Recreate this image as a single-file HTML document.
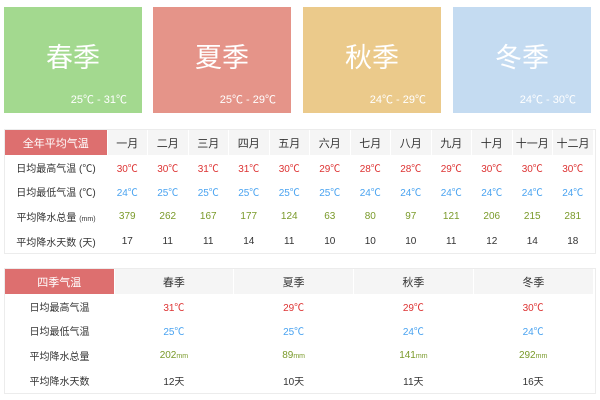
<!DOCTYPE html>
<html><head><meta charset="utf-8"><style>
*{margin:0;padding:0;box-sizing:border-box}
body{width:600px;height:400px;background:#fff;position:relative;overflow:hidden;font-family:"Liberation Sans","Noto Sans CJK SC",sans-serif}
.card{position:absolute;top:7px;width:138px;height:106px;color:#fff}
.card .t{position:absolute;top:35px;left:0;right:0;text-align:center;font-size:27px;line-height:32px}
.card .r{position:absolute;right:15px;top:86px;font-size:11px;line-height:14px}
table{position:absolute;border-collapse:collapse;font-size:10px;color:#333;table-layout:fixed}
td{text-align:center;height:24.6px;padding:0;white-space:nowrap}
tr.h td{background:#f5f5f5;font-size:11px;border-left:1px solid #fff;height:25px}
tr.h td.red{background:#dd6f6f;color:#fff;border-left:none}
.hi{color:#d33}.lo{color:#4aa3f0}.rn{color:#7a9a2a}
.wrap{position:absolute;border:1px solid #ececec}
</style></head><body>
<div class="card" style="left:4px;background:#a3d98f"><div class="t">春季</div><div class="r">25℃ - 31℃</div></div>
<div class="card" style="left:153px;background:#e59489"><div class="t">夏季</div><div class="r">25℃ - 29℃</div></div>
<div class="card" style="left:303px;background:#ebca8b"><div class="t">秋季</div><div class="r">24℃ - 29℃</div></div>
<div class="card" style="left:453px;background:#c4dbf1"><div class="t">冬季</div><div class="r">24℃ - 30℃</div></div>

<div class="wrap" style="left:4px;top:129px;width:592px;height:125px"></div>
<table style="left:5px;top:130px;width:588px">
<colgroup><col style="width:102px"><col span="12" style="width:40.5px"></colgroup>
<tr class="h"><td class="red">全年平均气温</td><td>一月</td><td>二月</td><td>三月</td><td>四月</td><td>五月</td><td>六月</td><td>七月</td><td>八月</td><td>九月</td><td>十月</td><td>十一月</td><td>十二月</td></tr>
<tr class="hi"><td style="color:#333">日均最高气温 (℃)</td><td>30℃</td><td>30℃</td><td>31℃</td><td>31℃</td><td>30℃</td><td>29℃</td><td>28℃</td><td>28℃</td><td>29℃</td><td>30℃</td><td>30℃</td><td>30℃</td></tr>
<tr class="lo"><td style="color:#333">日均最低气温 (℃)</td><td>24℃</td><td>25℃</td><td>25℃</td><td>25℃</td><td>25℃</td><td>25℃</td><td>24℃</td><td>24℃</td><td>24℃</td><td>24℃</td><td>24℃</td><td>24℃</td></tr>
<tr class="rn"><td style="color:#333">平均降水总量 <span style="font-size:7px">(mm)</span></td><td>379</td><td>262</td><td>167</td><td>177</td><td>124</td><td>63</td><td>80</td><td>97</td><td>121</td><td>206</td><td>215</td><td>281</td></tr>
<tr><td>平均降水天数 (天)</td><td>17</td><td>11</td><td>11</td><td>14</td><td>11</td><td>10</td><td>10</td><td>10</td><td>11</td><td>12</td><td>14</td><td>18</td></tr>
</table>

<div class="wrap" style="left:4px;top:268px;width:592px;height:126px"></div>
<table style="left:5px;top:269px;width:588px">
<colgroup><col style="width:109px"><col span="4" style="width:119.75px"></colgroup>
<tr class="h"><td class="red">四季气温</td><td>春季</td><td>夏季</td><td>秋季</td><td>冬季</td></tr>
<tr class="hi"><td style="color:#333">日均最高气温</td><td>31℃</td><td>29℃</td><td>29℃</td><td>30℃</td></tr>
<tr class="lo"><td style="color:#333">日均最低气温</td><td>25℃</td><td>25℃</td><td>24℃</td><td>24℃</td></tr>
<tr class="rn"><td style="color:#333">平均降水总量</td><td>202<span style="font-size:7px">mm</span></td><td>89<span style="font-size:7px">mm</span></td><td>141<span style="font-size:7px">mm</span></td><td>292<span style="font-size:7px">mm</span></td></tr>
<tr><td>平均降水天数</td><td>12天</td><td>10天</td><td>11天</td><td>16天</td></tr>
</table>
</body></html>
